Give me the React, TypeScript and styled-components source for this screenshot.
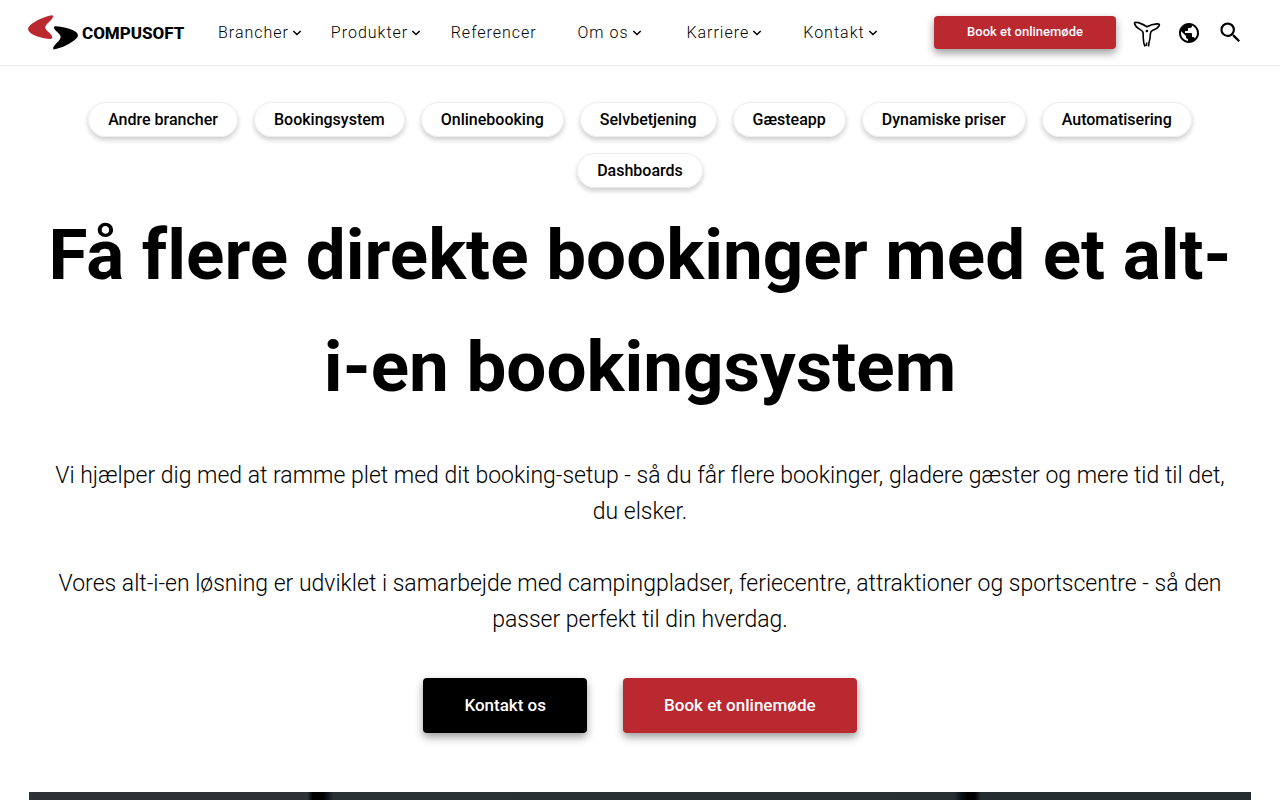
import React from 'react';
import styled, { createGlobalStyle } from 'styled-components';
import { MdPublic, MdSearch } from 'react-icons/md';

const RED = '#ba2830';

const GlobalStyle = createGlobalStyle`
  *, *::before, *::after { box-sizing: border-box; }
  body {
    margin: 0;
    background: #fff;
    color: #000;
    font-family: Roboto, "Liberation Sans", sans-serif;
    font-variant-ligatures: none;
  }
`;

const Page = styled.div`
  display: flex;
  flex-direction: column;
  min-height: 100vh;
`;

const Header = styled.header`
  display: flex;
  align-items: center;
  height: 66px;
  padding: 0 36px 0 28px;
  border-bottom: 1px solid #ebebeb;
`;

const LogoLink = styled.a`
  display: flex;
  align-items: center;
  gap: 4px;
  width: 190px;
  flex-shrink: 0;
  color: #000;
  text-decoration: none;
`;

const LogoText = styled.span`
  font-size: 17px;
  font-weight: 800;
  line-height: 24px;
`;

const Nav = styled.nav`
  flex: 1;
`;

const NavList = styled.ul`
  display: grid;
  grid-template-columns: 113fr 120fr 127fr 109fr 117fr 131fr;
  margin: 0;
  padding: 0;
  list-style: none;
`;

const NavLink = styled.a`
  display: inline-flex;
  align-items: center;
  gap: 3px;
  color: #000;
  font-size: 16px;
  font-weight: 300;
  line-height: 24px;
  letter-spacing: 1px;
  white-space: nowrap;
  text-decoration: none;
`;

const Button = styled.button<{ $tone?: 'red' | 'black'; $small?: boolean }>`
  height: ${(p) => (p.$small ? 33 : 55)}px;
  padding: 0 ${(p) => (p.$small ? 33 : 41)}px 2px;
  border: 0;
  border-radius: 4px;
  background: ${(p) => (p.$tone === 'black' ? '#000' : RED)};
  box-shadow: 0 4px 8px rgba(0, 0, 0, 0.4);
  color: #fff;
  font-family: inherit;
  font-size: ${(p) => (p.$small ? 13 : 17)}px;
  font-weight: 500;
  white-space: nowrap;
  cursor: pointer;
`;

const Tools = styled.div`
  display: flex;
  align-items: center;
  gap: 16px;
  margin-left: 17px;
`;

const IconButton = styled.button`
  display: flex;
  padding: 0;
  border: 0;
  background: none;
  color: #000;
  cursor: pointer;
`;

const Main = styled.main`
  display: flex;
  flex: 1;
  flex-direction: column;
  padding: 36px 28px 0;
  text-align: center;
`;

const Pills = styled.div`
  display: flex;
  flex-wrap: wrap;
  justify-content: center;
  gap: 16px;
`;

const Pill = styled.a`
  height: 35px;
  padding: 0 19px;
  border: 1px solid #ececec;
  border-radius: 18px;
  box-shadow: 0 3px 5px rgba(0, 0, 0, 0.2);
  color: #000;
  font-size: 16px;
  font-weight: 500;
  line-height: 33px;
  text-decoration: none;
`;

const Title = styled.h1`
  margin: 11px 0 35px;
  font-size: 71px;
  font-weight: 700;
  line-height: 112px;
`;

const Lead = styled.p`
  margin: 0 0 36px;
  padding: 0 14px;
  font-size: 23px;
  font-weight: 300;
  line-height: 36px;
`;

const Actions = styled.div`
  display: flex;
  justify-content: center;
  gap: 36px;
  padding-top: 4px;
`;

const Photo = styled.div`
  flex: 1;
  min-height: 8px;
  margin: 59px 1px 0;
  background: linear-gradient(
    90deg,
    #2c3234 0%, #2c3234 22.8%, #000 23.2%, #000 24%, #0a1015 24.4%, #2a3133 24.9%,
    #282f32 75.7%, #0a1218 76.3%, #000 76.8%, #000 77.4%, #252d30 77.9%, #252d30 100%
  );
`;

const Chevron = () => (
  <svg width="10" height="8" viewBox="0 0 10 8" fill="none" stroke="#000" strokeWidth="1.5" aria-hidden="true">
    <path d="M1.3 2 5 5.5 8.7 2" />
  </svg>
);

const LogoMark = () => (
  <svg width="50" height="36" viewBox="0 0 50 36" aria-hidden="true">
    <path
      fill={RED}
      d="M24.5 .3C16 1.500 6 6.200 1.600 10.900C-.5 13.200 -.4 14.800 1.500 16.900C5.500 20.900 14 23.200 22.500 23.900C24.500 23.800 24.800 21.500 23 19.500C21.500 17.800 19.500 16.500 18 14.500C16.800 12.700 17.300 11 19.200 8.800C22 5.800 26.800 2 24.500 .3Z"
    />
    <path
      fill="#000"
      d="M27.500 11.300C36 11.900 44 13.900 48.300 17.200C50.600 19.200 50.400 21.400 48 23.700C43.500 28.200 34 33 25.700 34.400C23.500 33 28 28.800 30.800 25.800C33 23.300 33.200 21.500 31.500 19.300C30 17.300 28 16.200 26.700 14.500C25.300 12.600 25.800 11.500 27.500 11.300Z"
    />
  </svg>
);

const FigureIcon = () => (
  <svg width="28" height="28" viewBox="0 0 28 28" fill="none" stroke="#000" strokeWidth="1.6" strokeLinejoin="round" aria-hidden="true">
    <path d="M12 27.500L10.800 24C10.200 20.500 10.100 16.500 10.100 13.800C9.900 12 8.500 11.200 6.500 10.100C3.800 8.600 1.900 6.300 1.500 4.500C1.300 3.500 2.300 3.300 3.500 3.400C7 3.600 11 6 14 7.800C17 6.100 20.500 5.100 24 4.900C26 4.800 26.900 5.400 26.200 6.600C25 8.800 22.500 10.300 19.800 11.200C18.200 11.800 17.600 12.800 17.500 14.300C17.300 17.500 17 21 15.900 24L15.600 27.500M13.300 27L13.700 23.500" />
    <circle cx="13.9" cy="12" r="1.3" fill="#000" stroke="none" />
  </svg>
);

const navItems = [
  { label: 'Brancher', menu: true },
  { label: 'Produkter', menu: true },
  { label: 'Referencer', menu: false },
  { label: 'Om os', menu: true },
  { label: 'Karriere', menu: true },
  { label: 'Kontakt', menu: true },
];

const pills = [
  'Andre brancher', 'Bookingsystem', 'Onlinebooking', 'Selvbetjening',
  'Gæsteapp', 'Dynamiske priser', 'Automatisering', 'Dashboards',
];

export default function App() {
  return (
    <Page>
      <GlobalStyle />
      <Header>
        <LogoLink href="#">
          <LogoMark />
          <LogoText>COMPUSOFT</LogoText>
        </LogoLink>
        <Nav>
          <NavList>
            {navItems.map((item) => (
              <li key={item.label}>
                <NavLink href="#">
                  {item.label}
                  {item.menu && <Chevron />}
                </NavLink>
              </li>
            ))}
          </NavList>
        </Nav>
        <Button $small>Book et onlinemøde</Button>
        <Tools>
          <IconButton aria-label="Hjælp"><FigureIcon /></IconButton>
          <IconButton aria-label="Sprog"><MdPublic size={24} /></IconButton>
          <IconButton aria-label="Søg"><MdSearch size={27} /></IconButton>
        </Tools>
      </Header>
      <Main>
        <Pills>
          {pills.map((label) => (
            <Pill key={label} href="#">{label}</Pill>
          ))}
        </Pills>
        <Title>Få flere direkte bookinger med et alt-i-en bookingsystem</Title>
        <Lead>
          Vi hjælper dig med at ramme plet med dit booking-setup - så du får flere bookinger, gladere gæster og mere tid til det, du elsker.
        </Lead>
        <Lead>
          Vores alt-i-en løsning er udviklet i samarbejde med campingpladser, feriecentre, attraktioner og sportscentre - så den passer perfekt til din hverdag.
        </Lead>
        <Actions>
          <Button $tone="black">Kontakt os</Button>
          <Button>Book et onlinemøde</Button>
        </Actions>
        <Photo />
      </Main>
    </Page>
  );
}
